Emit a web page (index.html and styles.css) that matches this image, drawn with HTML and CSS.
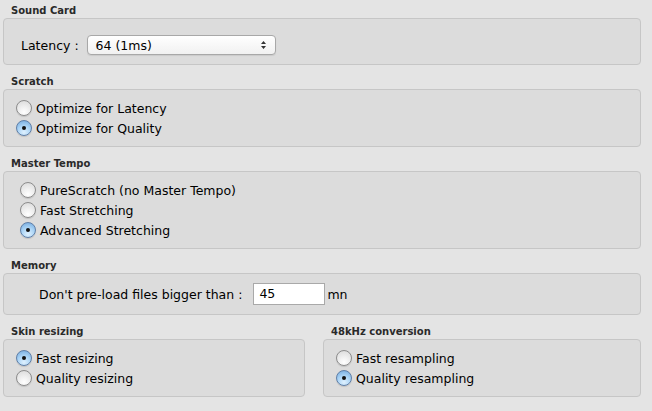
FILE: index.html
```html
<!DOCTYPE html>
<html>
<head>
<meta charset="utf-8">
<link rel="stylesheet" href="styles.css">
</head>
<body>
<div class="page">
  <section class="group">
    <div class="title">Sound Card</div>
    <div class="box box-sound">
      <span class="label">Latency :</span>
      <div class="select">
        <span>64 (1ms)</span>
        <svg class="arrows" width="7" height="10" viewBox="0 0 7 10"><path d="M3.5 1 L6 4 L1 4 Z M3.5 9 L6 6 L1 6 Z" fill="#333"/></svg>
      </div>
    </div>
  </section>
  <section class="group">
    <div class="title">Scratch</div>
    <div class="box box-radios">
      <label class="radio"><span class="dot"></span>Optimize for Latency</label>
      <label class="radio"><span class="dot on"></span>Optimize for Quality</label>
    </div>
  </section>
  <section class="group">
    <div class="title">Master Tempo</div>
    <div class="box box-radios wide">
      <label class="radio"><span class="dot"></span>PureScratch (no Master Tempo)</label>
      <label class="radio"><span class="dot"></span>Fast Stretching</label>
      <label class="radio"><span class="dot on"></span>Advanced Stretching</label>
    </div>
  </section>
  <section class="group">
    <div class="title">Memory</div>
    <div class="box box-memory">
      <span class="label">Don't pre-load files bigger than :</span>
      <div class="input">45</div>
      <span class="unit">mn</span>
    </div>
  </section>
  <div class="cols">
    <section class="group">
      <div class="title">Skin resizing</div>
      <div class="box box-radios">
        <label class="radio"><span class="dot on"></span>Fast resizing</label>
        <label class="radio"><span class="dot"></span>Quality resizing</label>
      </div>
    </section>
    <section class="group">
      <div class="title">48kHz conversion</div>
      <div class="box box-radios">
        <label class="radio"><span class="dot"></span>Fast resampling</label>
        <label class="radio"><span class="dot on"></span>Quality resampling</label>
      </div>
    </section>
  </div>
</div>
</body>
</html>
```
FILE: styles.css
```css
html, body {
  margin: 0;
  padding: 0;
  background: #e4e4e4;
  font-family: "DejaVu Sans", sans-serif;
  font-size: 12.5px;
  color: #000;
}
.page {
  padding: 0 11px 0 3px;
  display: flex;
  flex-direction: column;
  gap: 6px;
}
.title {
  height: 14px;
  padding: 4px 0 0 8px;
  font-size: 10px;
  font-weight: bold;
  line-height: 14px;
  color: #2a2a2a;
}
.box {
  background: #dcdcdc;
  border: 1px solid #c6c6c6;
  border-radius: 4px;
}
.box-sound {
  padding: 16px 0 9px 17px;
  display: flex;
  align-items: center;
  height: 20px;
}
.label { margin-right: 8px; }
.select {
  display: flex;
  align-items: center;
  justify-content: space-between;
  padding: 0 8px 0 8px;
  box-sizing: border-box;
  width: 189px;
  height: 20px;
  border: 1px solid #a8a8a8;
  border-radius: 4px;
  background: linear-gradient(#ffffff, #f1f1f1);
  box-shadow: 0 1px 1px rgba(0,0,0,0.08);
}
.box-radios {
  padding: 8px 0 8px 12px;
  display: flex;
  flex-direction: column;
}
.box-radios.wide { padding-left: 16px; }
.radio {
  display: flex;
  align-items: center;
  height: 20px;
  gap: 4px;
}
.dot {
  width: 14px;
  height: 14px;
  border-radius: 50%;
  border: 1px solid #8c8c8c;
  background: radial-gradient(circle at 50% 80%, #ffffff 0%, #f0f0f0 40%, #d8d8d8 100%);
  position: relative;
  box-shadow: 0 1px 1px rgba(0,0,0,0.12);
}
.dot.on {
  border-color: #5f7fa8;
  background: radial-gradient(circle at 50% 80%, #dff1ff 0%, #a9d3f5 50%, #6fa6dc 100%);
}
.dot.on::after {
  content: "";
  position: absolute;
  left: 5px;
  top: 5px;
  width: 4px;
  height: 4px;
  border-radius: 50%;
  background: #111;
}
.box-memory {
  padding: 9px 0 9px 35px;
  display: flex;
  align-items: center;
  height: 22px;
}
.box-memory .label { margin-right: 11px; }
.input {
  width: 72px;
  height: 22px;
  box-sizing: border-box;
  border: 1px solid #a9a9a9;
  background: #fff;
  padding: 2px 5px;
  line-height: 16px;
}
.unit { margin-left: 2px; }
.cols {
  display: grid;
  grid-template-columns: 302px 1fr;
  gap: 18px;
}
```
